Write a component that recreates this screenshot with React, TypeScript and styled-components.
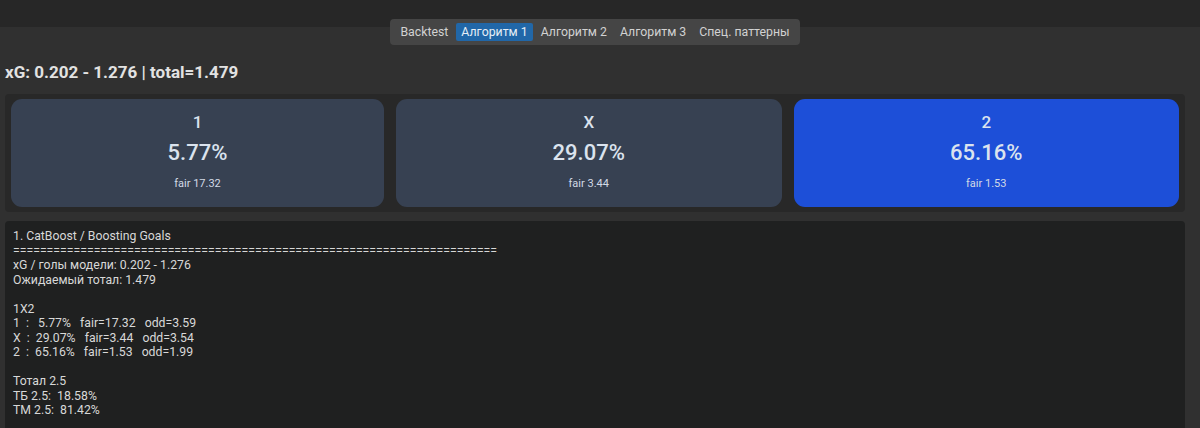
import React from "react";
import styled, { createGlobalStyle } from "styled-components";

const Global = createGlobalStyle`
  html, body { margin: 0; padding: 0; background: #303030; }
  body { font-family: Roboto, "Noto Sans", Arial, sans-serif; color: #dcdcdc; }
`;

const Page = styled.div`
  width: 1200px;
  height: 428px;
  overflow: hidden;
  background: linear-gradient(#272727 0, #272727 27px, #303030 27px);
`;

const Content = styled.div`
  padding: 19px 15px 0 5px;
  display: flex;
  flex-direction: column;
`;

const TabBar = styled.div`
  align-self: center;
  display: flex;
  gap: 3px;
  padding: 4px 5px;
  background: #454545;
  border-radius: 4px;
`;

const Tab = styled.div<{ $active?: boolean }>`
  font-size: 12.3px;
  line-height: 18px;
  padding: 0 5px;
  border-radius: 2px;
  color: ${(p) => (p.$active ? "#e6eef6" : "#d2d2d2")};
  background: ${(p) => (p.$active ? "#2167a8" : "transparent")};
`;

const Heading = styled.h2`
  margin: 17px 0 12px;
  font-size: 17px;
  line-height: 20px;
  font-weight: 700;
  color: #e2e2e2;
`;

const CardRow = styled.div`
  display: flex;
  gap: 12px;
  padding: 5px 6px;
  background: #282828;
  border-radius: 4px;
`;

const Card = styled.div<{ $hl?: boolean }>`
  flex: 1 1 auto;
  height: 108px;
  box-sizing: border-box;
  padding-top: 13px;
  border-radius: 11px;
  background: ${(p) => (p.$hl ? "#1d4fd8" : "#374152")};
  display: flex;
  flex-direction: column;
  align-items: center;
  color: #dbe3ee;
`;

const Label = styled.div`
  font-size: 17px;
  line-height: 20px;
  font-weight: 500;
`;

const Pct = styled.div`
  margin-top: 8px;
  font-size: 22px;
  line-height: 26px;
  font-weight: 500;
`;

const Fair = styled.div`
  margin-top: 11px;
  font-size: 11px;
  line-height: 14px;
  color: #d2dae6;
`;

const Report = styled.pre`
  margin: 9px 0 0;
  padding: 8px 8px 20px;
  background: #1f2020;
  border-radius: 4px;
  font-family: Roboto, "Noto Sans", Arial, sans-serif;
  font-size: 12.25px;
  line-height: 14.5px;
  color: #d8d8d8;
  white-space: pre;
`;

const cards = [
  { label: "1", pct: "5.77%", fair: "fair 17.32" },
  { label: "X", pct: "29.07%", fair: "fair 3.44" },
  { label: "2", pct: "65.16%", fair: "fair 1.53", hl: true },
];

const tabs = ["Backtest", "Алгоритм 1", "Алгоритм 2", "Алгоритм 3", "Спец. паттерны"];

const report = `1. CatBoost / Boosting Goals
${"=".repeat(72)}
xG / голы модели: 0.202 - 1.276
Ожидаемый тотал: 1.479

1X2
1  :   5.77%   fair=17.32   odd=3.59
X  :  29.07%   fair=3.44   odd=3.54
2  :  65.16%   fair=1.53   odd=1.99

Тотал 2.5
ТБ 2.5:  18.58%
ТМ 2.5:  81.42%
`;

export default function App() {
  return (
    <Page>
      <Global />
      <Content>
        <TabBar>
          {tabs.map((t, i) => (
            <Tab key={t} $active={i === 1}>
              {t}
            </Tab>
          ))}
        </TabBar>
        <Heading>xG: 0.202 - 1.276 | total=1.479</Heading>
        <CardRow>
          {cards.map((c) => (
            <Card key={c.label} $hl={c.hl}>
              <Label>{c.label}</Label>
              <Pct>{c.pct}</Pct>
              <Fair>{c.fair}</Fair>
            </Card>
          ))}
        </CardRow>
        <Report>{report}</Report>
      </Content>
    </Page>
  );
}
